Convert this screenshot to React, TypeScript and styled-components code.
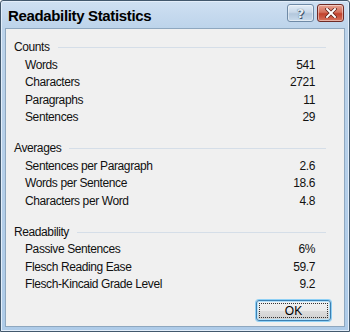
import React from 'react';
import styled, {createGlobalStyle} from 'styled-components';

const GlobalStyle = createGlobalStyle`
  html, body {
    margin: 0;
    padding: 0;
    width: 350px;
    height: 332px;
    overflow: hidden;
    background: #ffffff;
  }
  body {
    font-family: 'Liberation Sans', Arial, sans-serif;
  }
`;

const Window = styled.div`
  box-sizing: border-box;
  width: 350px;
  height: 332px;
  border: 1px solid #42586d;
  border-radius: 3px 3px 0 0;
  background: linear-gradient(180deg, #cfe0f2 0%, #bcd3ea 28px, #aecbe8 100%);
  display: flex;
  flex-direction: column;
  box-shadow: inset 0 0 0 1px #e3eefa;
`;

const TitleBar = styled.div`
  height: 27px;
  flex: none;
  display: flex;
  align-items: center;
  padding: 0 5px 0 7px;
`;

const Title = styled.div`
  flex: 1;
  font-size: 15px;
  font-weight: bold;
  color: #000;
  letter-spacing: -0.35px;
  padding-top: 1px;
`;

const CaptionButton = styled.div<{$close?: boolean}>`
  box-sizing: border-box;
  width: 27px;
  height: 18px;
  margin-left: 3px;
  margin-top: -3px;
  border: 1px solid ${(p) => (p.$close ? '#6e2a25' : '#6f8aa6')};
  border-radius: 3px;
  background: ${(p) =>
    p.$close
      ? 'linear-gradient(180deg, #e8a291 0%, #d4705c 45%, #c2412c 55%, #d7735d 100%)'
      : 'linear-gradient(180deg, #e4edf6 0%, #c8d8e9 45%, #b3c7dc 55%, #c9dbec 100%)'};
  box-shadow: inset 0 0 0 1px rgba(255, 255, 255, 0.45);
  display: flex;
  align-items: center;
  justify-content: center;
`;

const HelpGlyph = styled.span`
  font-family: 'DejaVu Sans', sans-serif;
  font-weight: bold;
  font-size: 13px;
  color: #e8eef5;
  text-shadow: 0 0 1px #3e566e, 1px 1px 0 #3e566e;
  line-height: 1;
`;

const Panel = styled.div`
  flex: 1;
  margin: 0 4px 4px;
  border: 1px solid #8ea7bf;
  background: #f0f0f0;
  padding: 10px 0 0 8px;
  display: flex;
  flex-direction: column;
  font-size: 12px;
  letter-spacing: -0.4px;
  color: #111;
`;

const Group = styled.div`
  & + & {
    margin-top: 13.5px;
  }
`;

const GroupHeader = styled.div`
  display: flex;
  align-items: center;
  gap: 8px;
  line-height: 17.5px;
  margin-right: 18px;

  &::after {
    content: '';
    flex: 1;
    height: 1px;
    background: #d5dee8;
  }
`;

const Row = styled.div`
  display: flex;
  justify-content: space-between;
  line-height: 17.5px;
  padding-left: 11px;
  margin-right: 29px;
`;

const Footer = styled.div`
  margin-top: auto;
  display: flex;
  justify-content: flex-end;
  padding: 0 13px 5px 0;
`;

const OkButton = styled.button`
  box-sizing: border-box;
  width: 75px;
  height: 21px;
  border: 1px solid #3c7fb1;
  border-radius: 3px;
  background: linear-gradient(180deg, #f2f2f2 0%, #ebebeb 50%, #dddddd 51%, #cfcfcf 100%);
  box-shadow: 0 0 0 1px #8fd0f5, inset 0 0 0 1px #b6e2fa;
  font-family: 'Liberation Sans', Arial, sans-serif;
  font-size: 12px;
  color: #000;
  padding: 2px;
  display: flex;
`;

const FocusRect = styled.span`
  flex: 1;
  border: 1px dotted #333;
  display: flex;
  align-items: center;
  justify-content: center;
`;

type Stat = [string, string];

const groups: {title: string; rows: Stat[]}[] = [
  {
    title: 'Counts',
    rows: [
      ['Words', '541'],
      ['Characters', '2721'],
      ['Paragraphs', '11'],
      ['Sentences', '29']
    ]
  },
  {
    title: 'Averages',
    rows: [
      ['Sentences per Paragraph', '2.6'],
      ['Words per Sentence', '18.6'],
      ['Characters per Word', '4.8']
    ]
  },
  {
    title: 'Readability',
    rows: [
      ['Passive Sentences', '6%'],
      ['Flesch Reading Ease', '59.7'],
      ['Flesch-Kincaid Grade Level', '9.2']
    ]
  }
];

const CloseIcon = () => (
  <svg width="12" height="10" viewBox="0 0 12 10">
    <path
      d="M2 1 L10 9 M10 1 L2 9"
      stroke="#5a1d16"
      strokeWidth="3.4"
      strokeLinecap="square"
    />
    <path
      d="M2 1 L10 9 M10 1 L2 9"
      stroke="#ffffff"
      strokeWidth="2"
      strokeLinecap="square"
    />
  </svg>
);

const App = () => {
  return (
    <>
      <GlobalStyle />
      <Window>
        <TitleBar>
          <Title>Readability Statistics</Title>
          <CaptionButton>
            <HelpGlyph>?</HelpGlyph>
          </CaptionButton>
          <CaptionButton $close>
            <CloseIcon />
          </CaptionButton>
        </TitleBar>
        <Panel>
          {groups.map((g) => (
            <Group key={g.title}>
              <GroupHeader>{g.title}</GroupHeader>
              {g.rows.map(([label, value]) => (
                <Row key={label}>
                  <span>{label}</span>
                  <span>{value}</span>
                </Row>
              ))}
            </Group>
          ))}
          <Footer>
            <OkButton type="button">
              <FocusRect>OK</FocusRect>
            </OkButton>
          </Footer>
        </Panel>
      </Window>
    </>
  );
};

export default App;
